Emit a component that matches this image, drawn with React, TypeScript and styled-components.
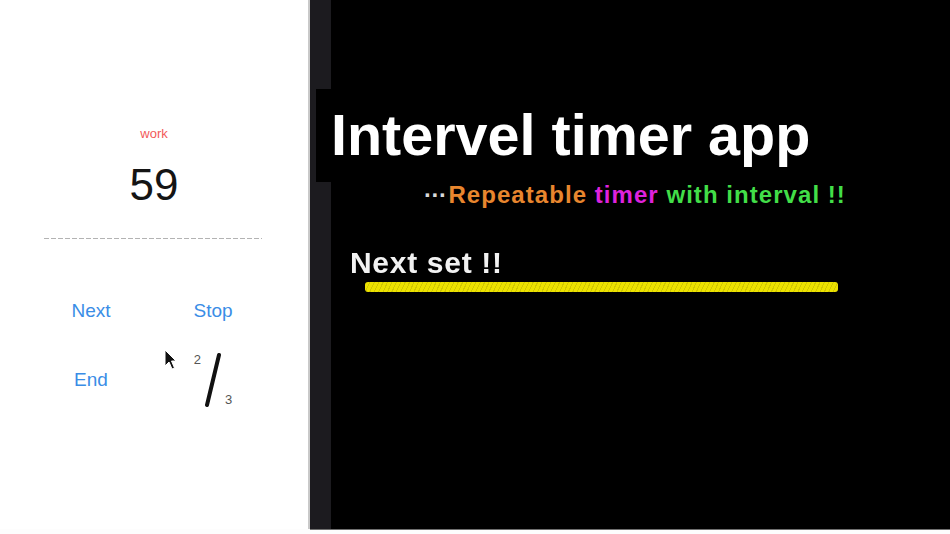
import React from 'react'
import styled, { createGlobalStyle } from 'styled-components'

const GlobalStyle = createGlobalStyle`
  html, body {
    margin: 0;
    padding: 0;
    background: #ffffff;
    font-family: 'Liberation Sans', Arial, sans-serif;
  }
`

const Screen = styled.div`
  display: flex;
  width: 950px;
  height: 534px;
  overflow: hidden;
  background: #fdfdfd;
`

const Phone = styled.div`
  position: relative;
  width: 310px;
  height: 529px;
  flex-shrink: 0;
  display: flex;
  flex-direction: column;
  align-items: center;
  padding-top: 125px;
  box-sizing: border-box;
  background: #ffffff;
  border-right: 2px solid #c9c9c9;
`

const Phase = styled.div`
  font-size: 13px;
  line-height: 18px;
  color: #f25a5a;
`

const Count = styled.div`
  margin-top: 17px;
  font-size: 44px;
  line-height: 50px;
  color: #141414;
`

const Divider = styled.div`
  margin-top: 28px;
  width: 218px;
  height: 1px;
  margin-left: -2px;
  background: repeating-linear-gradient(
    to right,
    #b3b3b3 0 5px,
    transparent 5px 7px
  );
`

const Controls = styled.div`
  align-self: flex-start;
  margin-top: 60px;
  margin-left: 30px;
  display: grid;
  grid-template-columns: 122px 122px;
  grid-auto-rows: 24px;
  row-gap: 45px;
  justify-items: center;
  align-items: center;
`

const ActionButton = styled.button`
  border: none;
  background: none;
  padding: 0;
  font-family: inherit;
  font-size: 19px;
  line-height: 24px;
  color: #3a8de6;
  cursor: pointer;
`

const Fraction = styled.div`
  display: flex;
  align-items: stretch;
  height: 54px;
  gap: 3px;
`

const SetNum = styled.span<{ $pos: 'top' | 'bottom' }>`
  align-self: ${(p) => (p.$pos === 'top' ? 'flex-start' : 'flex-end')};
  font-size: 13px;
  line-height: 14px;
  color: #555555;
`

const Cursor = styled.svg`
  position: absolute;
  left: 164px;
  top: 349px;
`

const Video = styled.div`
  flex: 1;
  height: 529px;
  display: flex;
  flex-direction: column;
  align-items: flex-start;
  background: linear-gradient(to right, #1c1b1f 0 21px, #000000 21px);
  border-bottom: 1px solid #6f6f6f;
`

const TitleBanner = styled.div`
  margin-top: 89px;
  margin-left: 6px;
  align-self: stretch;
  height: 93px;
  padding-left: 15px;
  background: #000000;
  font-size: 57.5px;
  line-height: 93px;
  font-weight: 700;
  color: #ffffff;
  white-space: nowrap;
`

const Tagline = styled.div`
  margin-left: 114px;
  font-size: 24px;
  line-height: 26px;
  font-weight: 700;
  letter-spacing: 1.05px;
  white-space: nowrap;
`

const Dots = styled.span`
  color: #d8d8d8;
  letter-spacing: -0.5px;
  margin-right: 2px;
`

const Tone = styled.span<{ $color: string }>`
  color: ${(p) => p.$color};
`

const NextSet = styled.div`
  margin-top: 38px;
  margin-left: 40px;
  font-size: 30px;
  line-height: 34px;
  font-weight: 700;
  letter-spacing: 0.7px;
  color: #f2f2f2;
  filter: blur(0.3px);
`

const Marker = styled.div`
  margin-top: 2px;
  margin-left: 55px;
  width: 473px;
  height: 10px;
  border-radius: 3px;
  background:
    repeating-linear-gradient(
      115deg,
      rgba(150, 140, 0, 0.3) 0 1px,
      transparent 1px 4px
    ),
    #ece200;
  filter: blur(0.6px);
`

export default function App() {
  return (
    <>
      <GlobalStyle />
      <Screen>
        <Phone>
          <Phase>work</Phase>
          <Count>59</Count>
          <Divider />
          <Controls>
            <ActionButton>Next</ActionButton>
            <ActionButton>Stop</ActionButton>
            <ActionButton>End</ActionButton>
            <Fraction>
              <SetNum $pos="top">2</SetNum>
              <svg width="18" height="54" viewBox="0 0 18 54">
                <line
                  x1="3"
                  y1="52"
                  x2="15"
                  y2="2"
                  stroke="#111"
                  strokeWidth="4"
                  strokeLinecap="round"
                />
              </svg>
              <SetNum $pos="bottom">3</SetNum>
            </Fraction>
          </Controls>
          <Cursor width="13" height="22" viewBox="0 0 13 22">
            <path
              d="M1 1 L1 17 L5 13 L8 20 L10.5 19 L7.5 12 L12 12 Z"
              fill="#111"
              stroke="#fff"
              strokeWidth="1"
              strokeLinejoin="round"
            />
          </Cursor>
        </Phone>
        <Video>
          <TitleBanner>Intervel timer app</TitleBanner>
          <Tagline>
            <Dots>···</Dots>
            <Tone $color="#e8862e">Repeatable</Tone>{' '}
            <Tone $color="#de22dc">timer</Tone>{' '}
            <Tone $color="#42de48">with interval !!</Tone>
          </Tagline>
          <NextSet>Next set !!</NextSet>
          <Marker />
        </Video>
      </Screen>
    </>
  )
}
